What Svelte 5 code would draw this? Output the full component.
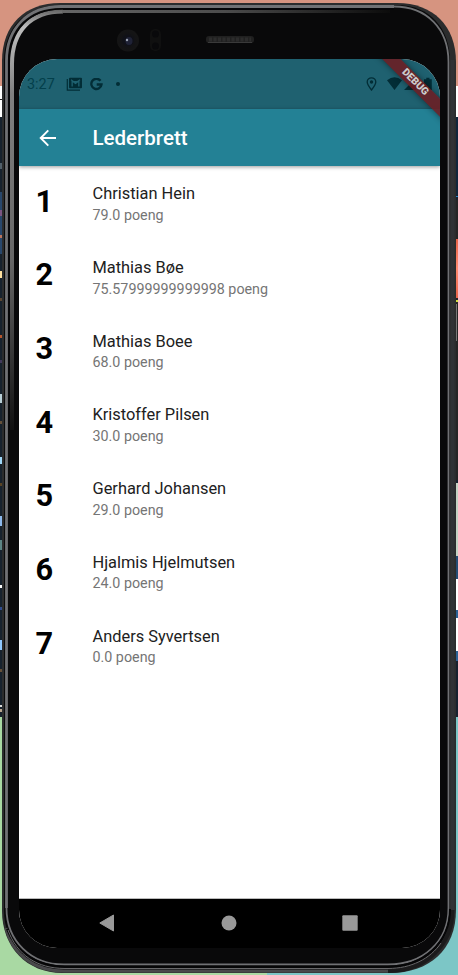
<script>
  const leaders = [
    { name: 'Christian Hein', points: '79.0' },
    { name: 'Mathias Bøe', points: '75.57999999999998' },
    { name: 'Mathias Boee', points: '68.0' },
    { name: 'Kristoffer Pilsen', points: '30.0' },
    { name: 'Gerhard Johansen', points: '29.0' },
    { name: 'Hjalmis Hjelmutsen', points: '24.0' },
    { name: 'Anders Syvertsen', points: '0.0' }
  ];
  const flecks = [
    [99, 1, '#222'], [163, 6, '#52606b'], [210, 6, '#7b5583'], [235, 3, '#bd765f'],
    [271, 7, '#ffe1a0'], [298, 3, '#5b4632'], [335, 3, '#b8562d'], [360, 3, '#42395c'],
    [394, 9, '#b9d0d8'], [421, 3, '#65503a'], [457, 7, '#9fd8fa'], [483, 3, '#594324'],
    [516, 10, '#8db9ed'], [540, 10, '#5c8585'], [585, 3, '#fff'], [607, 3, '#304d91'],
    [640, 10, '#8fc8ff'], [669, 3, '#65503a'], [705, 2, '#ddd'], [709, 3, '#b9a58f']
  ];
</script>

<main class="desktop">
  <svg class="backdrop" width="458" height="975" viewBox="0 0 458 975" aria-hidden="true">
    <defs>
      <linearGradient id="edge" x1="0" y1="0" x2="0" y2="1">
        <stop offset="0" stop-color="#e8644a" /><stop offset=".5" stop-color="#ff8b70" /><stop offset="1" stop-color="#e8644a" />
      </linearGradient>
    </defs>
    <path fill="#d69480" d="M0 0h458v86H0z" />
    <path fill="#fff" d="M0 86h458v31H0z" />
    <path fill="#17222e" d="M0 117h458v600H0z" />
    <path fill="#28476c" d="M0 192h10v62H0z" />
    <path fill="#a9d9a3" d="M0 717h267v258H0z" />
    <path fill="#7cc6c6" d="M267 717h191v258H267z" />
    <path fill="#10263b" d="M450 117h8v78h-8z" />
    <path fill="#262626" d="M450 200h8v280h-8z" />
    <path fill="#2783c7" d="M450 196h8v1h-8z" />
    <path fill="url(#edge)" d="M450 239h8v59h-8z" />
    <path fill="#d1df42" d="M450 300h8v2h-8z" />
    <path fill="#777" d="M456 304h1v37h-1z" />
    <path fill="#c4d2c3" d="M450 483h8v73h-8z" />
    <path fill="#244c74" d="M450 556h8v23h-8z" />
    <path fill="#fff" d="M450 579h8v72h-8z" />
    <path fill="#2c6195" d="M450 610h8v8h-8zM450 651h8v10h-8z" />
    {#each flecks as [y, h, fill]}
      <rect x="0" {y} width="2" height={h} {fill} />
    {/each}
  </svg>

  <section class="phone">
    <svg class="casing" width="458" height="975" viewBox="0 0 458 975" fill="none" aria-hidden="true">
      <defs>
        <linearGradient id="leftlight" gradientUnits="userSpaceOnUse" x1="0" y1="10" x2="0" y2="430">
          <stop offset="0" stop-color="#666" /><stop offset=".04" stop-color="#bdbdbd" /><stop offset=".1" stop-color="#aaa" /><stop offset=".2" stop-color="#808080" /><stop offset=".6" stop-color="#666" /><stop offset="1" stop-color="#111" />
        </linearGradient>
        <linearGradient id="toplight" gradientUnits="userSpaceOnUse" x1="60" y1="0" x2="390" y2="0">
          <stop offset="0" stop-color="#666" /><stop offset=".5" stop-color="#4c4c4c" /><stop offset="1" stop-color="#0c0c0c" />
        </linearGradient>
        <radialGradient id="lens"><stop offset="0" stop-color="#20222e" /><stop offset=".6" stop-color="#131315" /><stop offset="1" stop-color="#151515" /></radialGradient>
      </defs>
      <path fill="#2b2c2d" d="M2 61C2 25 25 3 60 3H397C433 3 456 26 456 62V910C456 950 429 973 390 973H62C27 973 2 947 2 911Z" />
      <path fill="#09090a" d="M4 61C4 27 27 5 61 5H396C430 5 450 28 450 62V908C450 944 426 970 389 970H64C29 970 4 945 4 910Z" />
      <path stroke="#707174" stroke-width="2.800" d="M6.500 908V61C6.500 28 28 6.500 61 6.500H394" />
      <path stroke="#707174" stroke-width="1.800" d="M394 6.500C427 6.500 448.500 29 448.500 62V908C448.500 942 423 964.500 388 964.500H64C31 964.500 6.500 941 6.500 908" />
      <path stroke="#303235" stroke-width="4" d="M452.500 60V910" />
      <path stroke="#1b1b1c" stroke-width="4" d="M452.500 910C452.500 944 427 971 388 971" />
      <path stroke="#48484a" stroke-width="3" d="M388 971H64C34 971 12 954 6 928" />
      <path stroke="#060607" stroke-width="2" d="M7 929C16 953 37 966.500 65 966.500H388C423 966.500 450 943 450 909" />
      <path stroke="#68686a" d="M8 930C17 955 37 968.500 65 968.500H388C411 968.500 430 959 441 943" />
      <path stroke="url(#leftlight)" stroke-width="4" d="M12 430V64C12 31 31 11.600 63 11.600" />
      <path stroke="url(#toplight)" stroke-width="3" d="M62 11.500H390" />
      <path stroke="#050506" d="M9 430V62C9 30 30 9 62 9H394" />
      <circle cx="128" cy="40.500" r="11" fill="url(#lens)" />
      <circle cx="128" cy="40.500" r="6" fill="#101118" />
      <ellipse cx="129" cy="41" rx="3.500" ry="4" fill="#1f2236" />
      <circle cx="127" cy="40" r="1.200" fill="#9aa2b1" />
      <rect x="150" y="29" width="11" height="22" rx="5" fill="#101010" />
      <circle cx="155.500" cy="34" r="3.500" fill="#09090b" /><circle cx="155.500" cy="46" r="3.500" fill="#09090b" />
      <rect x="206" y="36" width="48" height="7" rx="3" fill="#202020" />
      <path stroke="#2c2c2c" stroke-width="4" stroke-dasharray="3 1.500" d="M209 39.500H251" />
      <path stroke="#3a3a3a" d="M208 42.500H252" />
    </svg>

    <div class="screen">
      <div class="status">
        <span class="time">3:27</span>
        <svg class="gmail" width="17" height="15" viewBox="0 0 17 15"><path d="M1.300 2V13.100H14" fill="none" stroke="#022d36" stroke-width="1.200" /><rect x="3" y=".7" width="13" height="10.500" rx="1" fill="#022d36" /><path d="M5.500 9.500V4H13.500V9.500" fill="#1f6170" /><path d="M5 2.700L9.500 6L14 2.700" fill="none" stroke="#1f6170" stroke-width="1.100" /><path d="M6.800 10V5.300L9.500 7.300L12.200 5.300V10" fill="#022d36" /></svg>
        <svg class="google" width="13" height="13" viewBox="0 0 13 13"><path d="M10.500 2.800A5.100 5.100 0 1 0 11.500 6.500H6.700" fill="none" stroke="#022d36" stroke-width="2.300" /></svg>
        <i class="dot"></i>
        <div class="signals">
          <svg width="11" height="14" viewBox="0 0 11 14"><path d="M5.500 13C3.500 10.500 1.200 7.600 1.200 5.100a4.300 4.300 0 0 1 8.600 0C9.800 7.600 7.500 10.500 5.500 13Z" fill="none" stroke="#022d36" stroke-width="1.300" /><circle cx="5.500" cy="5" r="1.700" fill="#022d36" /></svg>
          <svg width="46" height="14" viewBox="0 0 46 14"><path fill="#022d36" d="M0 3.200Q7.500-2.500 15 3.200L7.500 13ZM17 13L29 1V13ZM37 13V2.200H39.300V.8H42.500V2.200H44.800V13Z" /></svg>
        </div>
      </div>
      <header>
        <svg width="18" height="18" viewBox="0 0 18 18" fill="none" stroke="#fff" stroke-width="1.900"><path d="M17 9H2M9.300 1.300L1.700 9L9.300 16.700" /></svg>
        <h1>Lederbrett</h1>
      </header>
      <ol>
        {#each leaders as leader, i}
          <li>
            <b>{i + 1}</b>
            <div class="person"><span class="name">{leader.name}</span><span class="points">{leader.points} poeng</span></div>
          </li>
        {/each}
      </ol>
      <nav>
        <svg width="16" height="18" viewBox="0 0 16 18"><path d="M14.500 1V17L.8 9Z" fill="#999" stroke="#999" stroke-linejoin="round" /></svg>
        <svg width="16" height="16" viewBox="0 0 16 16"><circle cx="8" cy="8" r="7.500" fill="#999" /></svg>
        <svg width="16" height="16" viewBox="0 0 16 16"><rect x=".3" y=".3" width="15.400" height="15.400" rx="1" fill="#999" /></svg>
      </nav>
      <div class="debug"><span>DEBUG</span></div>
    </div>
  </section>
</main>

<style>
  :global(body) { margin: 0; }
  .desktop { position: relative; width: 458px; height: 975px; overflow: hidden; font-family: Roboto, "Noto Sans", sans-serif; }
  .backdrop, .casing { position: absolute; inset: 0; display: block; }
  .phone { position: relative; box-sizing: border-box; width: 458px; height: 975px; padding: 59px 18px 27px 19px; }
  .screen { position: relative; height: 889px; display: flex; flex-direction: column; overflow: hidden; border-radius: 38px; background: #fff; }
  .status { display: flex; align-items: center; flex: 0 0 50px; box-sizing: border-box; padding: 0 7px 0 8px; background: #1f6170; color: #033f4b; }
  .time { width: 38.500px; font-size: 14.400px; }
  .google { margin-left: 7px; }
  .dot { width: 4px; height: 4px; margin-left: 13.500px; border-radius: 50%; background: #022d36; }
  .signals { display: flex; align-items: center; gap: 10px; margin-left: auto; }
  header { position: relative; display: flex; align-items: center; flex: 0 0 57px; padding-left: 20px; background: #238195; color: #fff; box-shadow: 0 1px 4px #0006; }
  h1 { margin: 0 0 0 35.500px; padding-top: 1px; font-size: 20.500px; line-height: 24px; font-weight: 500; }
  ol { flex: 1; margin: 0; padding: 0; list-style: none; }
  li { display: flex; height: 73.700px; box-sizing: border-box; padding-left: 16.400px; }
  b { width: 57.100px; padding-top: 17.500px; font-size: 30.700px; line-height: 36px; color: #000; }
  .person { display: flex; flex-direction: column; padding-top: 18.400px; }
  .name { font-size: 16.400px; line-height: 20px; color: #212121; }
  .points { margin-top: .600px; font-size: 14.300px; line-height: 20px; color: #757575; }
  nav { display: flex; align-items: center; justify-content: space-between; flex: 0 0 49px; box-sizing: border-box; padding: 0 82px 1px 80px; background: #000; box-shadow: 0 -1px #bbb; }
  .debug { position: absolute; top: 17px; right: -24.500px; width: 100px; height: 12.500px; transform: rotate(45deg); background: #6d1c22e0; color: #ccc; text-align: center; font-size: 10.300px; line-height: 12.500px; font-weight: 900; box-shadow: 0 0 6px #0007; }
</style>
